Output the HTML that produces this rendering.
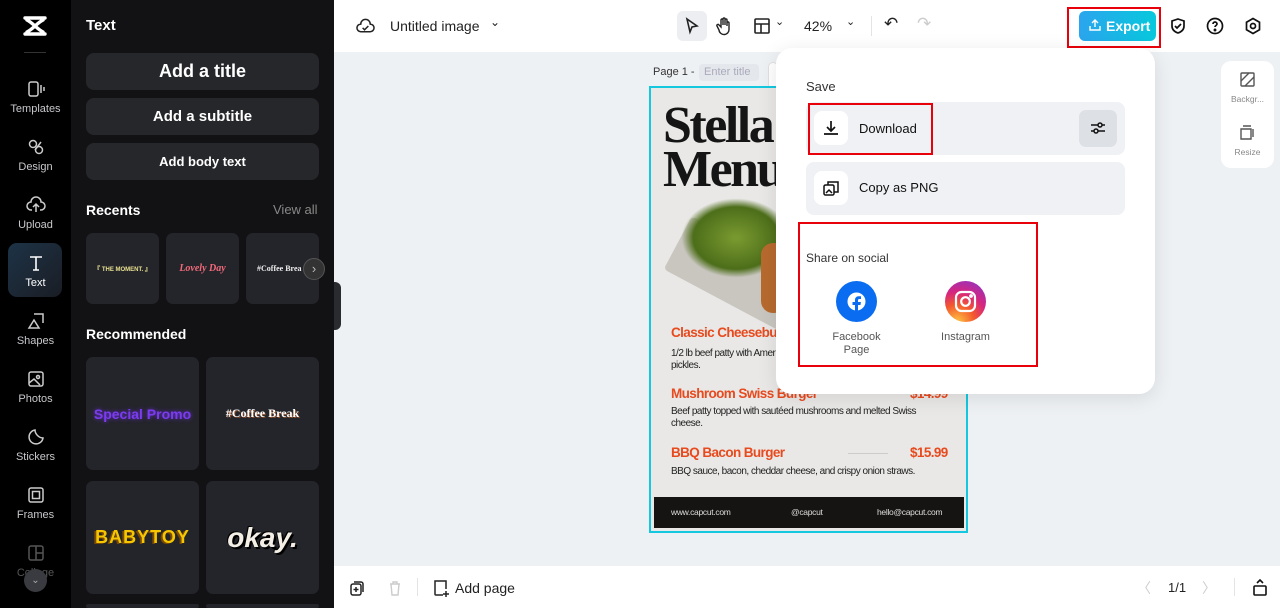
<!DOCTYPE html>
<html style="width:1280px;height:608px;overflow:hidden"><head><meta charset="utf-8"><style>
*{box-sizing:border-box;margin:0;padding:0}
body{width:1280px;height:608px;overflow:hidden;font-family:"Liberation Sans",sans-serif;background:#eef1f4;position:relative}
.abs{position:absolute}
.rail{left:0;top:0;width:71px;height:608px;background:#000}
.ri{position:absolute;left:0;width:71px;text-align:center;color:#c8c8cc;font-size:11px}
.ri svg{display:block;margin:0 auto 4px}
.panel{left:71px;top:0;width:263px;height:608px;background:#121214;color:#fff;overflow:hidden}
.btn{position:absolute;left:15px;width:233px;background:#26272b;border-radius:8px;text-align:center;font-weight:bold}
.card{position:absolute;background:#24252a;border-radius:7px;display:flex;align-items:center;justify-content:center}
.top{left:334px;top:0;width:946px;height:52px;background:#fff}
.bot{left:334px;top:566px;width:946px;height:42px;background:#fff}
.pop{left:776px;top:48px;width:379px;height:346px;background:#fff;border-radius:16px;box-shadow:0 4px 20px rgba(0,0,0,.1)}
.row{position:absolute;left:30px;width:319px;height:53px;background:#eff1f4;border-radius:8px}
.ib{position:absolute;left:8px;top:9px;width:34px;height:34px;background:#fff;border-radius:8px;display:flex;align-items:center;justify-content:center}
.red{position:absolute;border:2px solid #e8000b}
.menu{color:#e84a1e;font-weight:bold;font-size:13.5px;letter-spacing:-.6px}
.desc{color:#222;font-size:10px;letter-spacing:-.5px;line-height:12px}
</style></head><body>
<div class="abs rail">
 <svg class="abs" style="left:22px;top:15px" width="26" height="22" viewBox="0 0 26 22"><path d="M3 3h20M3 19h20M5 5c6 3 10 9 16 12M21 5C15 8 11 14 5 17" fill="none" stroke="#fff" stroke-width="3.4" stroke-linecap="round"/></svg>
 <div class="abs" style="left:24px;top:52px;width:22px;height:1px;background:#333"></div>
 <div class="ri" style="top:79px"><svg width="20" height="20" viewBox="0 0 20 20" fill="none" stroke="#ccc" stroke-width="1.5"><rect x="3" y="3" width="9" height="14" rx="2"/><path d="M15 6v8M18 8v4"/></svg>Templates</div>
 <div class="ri" style="top:137px"><svg width="20" height="20" viewBox="0 0 20 20" fill="none" stroke="#ccc" stroke-width="1.5"><circle cx="7" cy="7" r="3.5"/><circle cx="13" cy="13" r="3.5"/><path d="M9 13l6-8"/></svg>Design</div>
 <div class="ri" style="top:195px"><svg width="20" height="20" viewBox="0 0 20 20" fill="none" stroke="#ccc" stroke-width="1.5"><path d="M6 15H5a4 4 0 010-8 5 5 0 0110 0 4 4 0 010 8h-1M10 17V10M7 12l3-3 3 3"/></svg>Upload</div>
 <div class="abs" style="left:8px;top:243px;width:54px;height:54px;border-radius:9px;background:linear-gradient(135deg,#1d3347,#1a1d24)"></div>
 <div class="ri" style="top:253px;color:#fff"><svg width="20" height="20" viewBox="0 0 20 20" fill="none" stroke="#fff" stroke-width="1.6"><path d="M4 4h12M10 4v13M7 17h6"/></svg>Text</div>
 <div class="ri" style="top:311px"><svg width="20" height="20" viewBox="0 0 20 20" fill="none" stroke="#ccc" stroke-width="1.5"><path d="M8 3h9v9M3 17l5-8 5 8z"/></svg>Shapes</div>
 <div class="ri" style="top:369px"><svg width="20" height="20" viewBox="0 0 20 20" fill="none" stroke="#ccc" stroke-width="1.5"><rect x="3" y="3" width="14" height="14" rx="2"/><circle cx="12" cy="8" r="1.5"/><path d="M3 14l5-4 6 6"/></svg>Photos</div>
 <div class="ri" style="top:427px"><svg width="20" height="20" viewBox="0 0 20 20" fill="none" stroke="#ccc" stroke-width="1.5"><path d="M17 11a7 7 0 11-8-8c0 4 4 8 8 8z"/></svg>Stickers</div>
 <div class="ri" style="top:485px"><svg width="20" height="20" viewBox="0 0 20 20" fill="none" stroke="#ccc" stroke-width="1.5"><rect x="3" y="3" width="14" height="14" rx="2"/><rect x="6.5" y="6.5" width="7" height="7"/></svg>Frames</div>
 <div class="ri" style="top:543px;color:#555"><svg width="20" height="20" viewBox="0 0 20 20" fill="none" stroke="#555" stroke-width="1.5"><rect x="3" y="3" width="14" height="14" rx="2"/><path d="M10 3v14M10 10h7"/></svg>Collage</div>
 <div class="abs" style="left:24px;top:569px;width:23px;height:23px;border-radius:50%;background:#3a3b40;color:#aaa;font-size:10px;text-align:center;line-height:23px">⌄</div>
</div>
<div class="abs panel">
 <div class="abs" style="left:15px;top:17px;font-size:15px;font-weight:bold">Text</div>
 <div class="btn" style="top:53px;height:37px;line-height:37px;font-size:18px">Add a title</div>
 <div class="btn" style="top:98px;height:37px;line-height:37px;font-size:15px">Add a subtitle</div>
 <div class="btn" style="top:143px;height:37px;line-height:37px;font-size:13px">Add body text</div>
 <div class="abs" style="left:15px;top:202px;font-size:14px;font-weight:bold">Recents</div>
 <div class="abs" style="left:202px;top:202px;font-size:13px;color:#888">View all</div>
 <div class="card" style="left:15px;top:233px;width:73px;height:71px;font-size:6px;color:#e8e090;font-weight:bold">『 THE MOMENT. 』</div>
 <div class="card" style="left:95px;top:233px;width:73px;height:71px;font-size:10px;color:#f26a7a;font-style:italic;font-weight:bold;font-family:'Liberation Serif',serif">Lovely Day</div>
 <div class="card" style="left:175px;top:233px;width:73px;height:71px;font-size:8px;color:#eee;font-weight:bold;font-family:'Liberation Serif',serif;justify-content:flex-start;padding-left:11px;overflow:hidden;white-space:nowrap">#Coffee Brea</div>
 <div class="abs" style="left:232px;top:258px;width:22px;height:22px;border-radius:50%;background:#333;border:1px solid #555;color:#bbb;text-align:center;line-height:19px;font-size:13px">›</div>
 <div class="abs" style="left:15px;top:326px;font-size:14px;font-weight:bold">Recommended</div>
 <div class="card" style="left:15px;top:357px;width:113px;height:113px;color:#7b3cf0;font-size:14px;font-weight:bold;text-shadow:0 0 4px #6a2ed8">Special Promo</div>
 <div class="card" style="left:135px;top:357px;width:113px;height:113px;color:#fff;font-size:12px;font-weight:bold;font-family:'Liberation Serif',serif;text-shadow:1px 1px 0 #8a4a2a">#Coffee Break</div>
 <div class="card" style="left:15px;top:481px;width:113px;height:113px;color:#f6c600;font-size:18px;font-weight:900;letter-spacing:1px;text-shadow:-2px 1px 0 #7a4a00">BABYTOY</div>
 <div class="card" style="left:135px;top:481px;width:113px;height:113px;color:#f4efe6;font-size:28px;font-weight:900;font-style:italic;text-shadow:2px 2px 0 #000,-1px -1px 0 #000">okay.</div>
 <div class="card" style="left:15px;top:604px;width:113px;height:4px"></div>
 <div class="card" style="left:135px;top:604px;width:113px;height:4px"></div>
</div>
<div class="abs" style="left:334px;top:282px;width:7px;height:48px;background:#2a2b2f;border-radius:0 6px 6px 0"></div>
<div class="abs top">
 <svg class="abs" style="left:22px;top:17px" width="19" height="18" viewBox="0 0 20 18" fill="none" stroke="#222" stroke-width="1.6"><path d="M6 15H5a4 4 0 010-8 5 5 0 0110 0 4 4 0 010 8z"/><path d="M7 11l2 2 4-4"/></svg>
 <div class="abs" style="left:56px;top:18px;font-size:14px;color:#222">Untitled image</div>
 <div class="abs" style="left:156px;top:15px;font-size:12px;color:#222">⌄</div>
 <div class="abs" style="left:343px;top:11px;width:30px;height:30px;background:#eceef2;border-radius:6px"></div>
 <svg class="abs" style="left:350px;top:17px" width="16" height="18" viewBox="0 0 16 18" fill="none" stroke="#222" stroke-width="1.6"><path d="M3 2l10 7-5 1-2 5z"/></svg>
 <svg class="abs" style="left:382px;top:16px" width="18" height="20" viewBox="0 0 18 20" fill="none" stroke="#222" stroke-width="1.4"><path d="M5 11V4a1 1 0 012 0v5V3a1 1 0 012 0v6V4a1 1 0 012 0v6-3a1 1 0 012 0v6a5 5 0 01-10 1l-2-4a1 1 0 012-1z"/></svg>
 <svg class="abs" style="left:419px;top:17px" width="18" height="18" viewBox="0 0 18 18" fill="none" stroke="#222" stroke-width="1.6"><rect x="2" y="2" width="14" height="14" rx="1"/><path d="M2 7h14M8 7v9"/></svg>
 <div class="abs" style="left:441px;top:15px;font-size:11px;color:#222">⌄</div>
 <div class="abs" style="left:470px;top:18px;font-size:14px;color:#222">42%</div>
 <div class="abs" style="left:512px;top:15px;font-size:11px;color:#222">⌄</div>
 <div class="abs" style="left:537px;top:16px;width:1px;height:20px;background:#e4e4e4"></div>
 <div class="abs" style="left:550px;top:14px;font-size:17px;color:#222">↶</div>
 <div class="abs" style="left:583px;top:14px;font-size:17px;color:#ccc">↷</div>
 <div class="red" style="left:733px;top:7px;width:94px;height:41px"></div>
 <div class="abs" style="left:745px;top:11px;width:77px;height:30px;border-radius:6px;background:linear-gradient(90deg,#2ba5ee,#07c8dc);color:#fff;font-weight:bold;font-size:14px;line-height:30px;padding-left:27px">Export</div>
 <svg class="abs" style="left:754px;top:18px" width="14" height="14" viewBox="0 0 14 14" fill="none" stroke="#fff" stroke-width="1.4"><path d="M7 9V2M4 5l3-3 3 3M2 8v4h10V8"/></svg>
 <svg class="abs" style="left:835px;top:17px" width="18" height="18" viewBox="0 0 18 18" fill="none" stroke="#111" stroke-width="1.7"><path d="M9 2l6 2v5c0 4-3 6-6 7-3-1-6-3-6-7V4z"/><path d="M6 9l2 2 4-4"/></svg>
 <svg class="abs" style="left:872px;top:17px" width="18" height="18" viewBox="0 0 18 18" fill="none" stroke="#111" stroke-width="1.7"><circle cx="9" cy="9" r="7.5"/><path d="M7 7a2 2 0 114 0c0 1.5-2 1.5-2 3"/><circle cx="9" cy="13" r=".6" fill="#111"/></svg>
 <svg class="abs" style="left:910px;top:17px" width="18" height="18" viewBox="0 0 18 18" fill="none" stroke="#111" stroke-width="1.7"><path d="M9 1.5l6.5 3.75v7.5L9 16.5l-6.5-3.75v-7.5z"/><circle cx="9" cy="9" r="2.5"/></svg>
</div>
<div class="abs" style="left:653px;top:66px;font-size:11px;color:#333">Page 1 -</div>
<div class="abs" style="left:699px;top:64px;width:60px;height:17px;background:#e4e7eb;border-radius:4px;font-size:11px;color:#aab;padding:2px 5px">Enter title</div>
<div class="abs" style="left:768px;top:62px;width:10px;height:34px;background:#fff;border:1px solid #e0e0e0;border-radius:6px"></div>
<!-- page -->
<div class="abs" style="left:649px;top:86px;width:319px;height:447px;border:2px solid #14c8e0;background:#e9e8e6;overflow:hidden">
 <div class="abs" style="left:12px;top:16px;font-family:'Liberation Serif',serif;font-weight:bold;font-size:52px;line-height:44px;color:#151515;letter-spacing:-2.5px">Stella<br>Menu</div>
 <div class="abs" style="left:18px;top:160px;width:150px;height:60px;background:#c9c6c0;transform:rotate(28deg);border-radius:4px"></div>
 <div class="abs" style="left:30px;top:110px;width:110px;height:80px;background:radial-gradient(ellipse,#7a9a30,#4d6e1a 55%,transparent 70%)"></div>
 <div class="abs" style="left:110px;top:155px;width:25px;height:70px;background:#b76a2e;border-radius:12px"></div>
 <div class="abs menu" style="left:20px;top:237px">Classic Cheeseburger</div>
 <div class="abs desc" style="left:20px;top:260px">1/2 lb beef patty with American<br>pickles.</div>
 <div class="abs menu" style="left:20px;top:298px">Mushroom Swiss Burger</div>
 <div class="abs menu" style="left:259px;top:298px">$14.99</div>
 <div class="abs desc" style="left:20px;top:318px">Beef patty topped with sautéed mushrooms and melted Swiss<br>cheese.</div>
 <div class="abs menu" style="left:20px;top:357px">BBQ Bacon Burger</div>
 <div class="abs" style="left:197px;top:365px;width:40px;height:1px;background:#ccc"></div>
 <div class="abs menu" style="left:259px;top:357px">$15.99</div>
 <div class="abs desc" style="left:20px;top:378px">BBQ sauce, bacon, cheddar cheese, and crispy onion straws.</div>
 <div class="abs" style="left:3px;top:409px;width:310px;height:31px;background:#161412;color:#ddd;font-size:8.5px;letter-spacing:-.3px">
  <span class="abs" style="left:17px;top:10px">www.capcut.com</span><span class="abs" style="left:137px;top:10px">@capcut</span><span class="abs" style="left:223px;top:10px">hello@capcut.com</span></div>
</div>
<!-- popup -->
<div class="abs pop">
 <div class="abs" style="left:30px;top:31px;font-size:13px;color:#333">Save</div>
 <div class="row" style="top:54px"><div class="ib"><svg width="18" height="18" viewBox="0 0 18 18" fill="none" stroke="#111" stroke-width="1.7"><path d="M9 2v10M5 8l4 4 4-4M2 15h14"/></svg></div>
  <div class="abs" style="left:53px;top:19px;font-size:13px;color:#111">Download</div>
  <div class="abs" style="left:273px;top:8px;width:38px;height:37px;background:#dde0e5;border-radius:7px"></div>
  <svg class="abs" style="left:283px;top:17px" width="18" height="18" viewBox="0 0 18 18" fill="none" stroke="#111" stroke-width="1.5"><path d="M2 6h14M2 12h14"/><circle cx="11" cy="6" r="2" fill="#dde0e5"/><circle cx="7" cy="12" r="2" fill="#dde0e5"/></svg>
 </div>
 <div class="red" style="left:32px;top:55px;width:125px;height:52px"></div>
 <div class="row" style="top:114px"><div class="ib"><svg width="18" height="18" viewBox="0 0 18 18" fill="none" stroke="#111" stroke-width="1.5"><rect x="2" y="6" width="10" height="10" rx="1.5"/><path d="M6 6V3h10v10h-4M4 14l3-3 3 3"/></svg></div>
  <div class="abs" style="left:53px;top:18px;font-size:13px;color:#111">Copy as PNG</div></div>
 <div class="red" style="left:22px;top:174px;width:240px;height:145px"></div>
 <div class="abs" style="left:30px;top:203px;font-size:12px;color:#333">Share on social</div>
 <div class="abs" style="left:60px;top:233px;width:41px;height:41px;border-radius:50%;background:#0a6cf0"></div>
 <svg class="abs" style="left:70px;top:243px" width="21" height="21" viewBox="0 0 21 21"><circle cx="10.5" cy="10.5" r="9" fill="#fff"/><path d="M12 21v-7h2.5l.4-3H12V9.5c0-.9.3-1.5 1.5-1.5H15V5.3c-.3 0-1.2-.1-2.2-.1-2.2 0-3.8 1.3-3.8 3.8V11H6.5v3H9v7z" fill="#0a6cf0"/></svg>
 <div class="abs" style="left:50px;top:283px;width:61px;text-align:center;font-size:11px;color:#555;line-height:13px">Facebook<br>Page</div>
 <div class="abs" style="left:169px;top:233px;width:41px;height:41px;border-radius:50%;background:radial-gradient(circle at 30% 100%,#fdc443,#f4582d 35%,#d6257f 60%,#8b36c8 95%)"></div>
 <svg class="abs" style="left:178px;top:242px" width="23" height="23" viewBox="0 0 23 23" fill="none" stroke="#fff" stroke-width="2.2"><rect x="2" y="2" width="19" height="19" rx="5.5"/><circle cx="11.5" cy="11.5" r="4.3"/><circle cx="17" cy="6" r=".8" fill="#fff"/></svg>
 <div class="abs" style="left:159px;top:283px;width:61px;text-align:center;font-size:11px;color:#555">Instagram</div>
</div>
<div class="abs" style="left:1221px;top:61px;width:53px;height:107px;background:#fff;border-radius:10px">
 <svg class="abs" style="left:19px;top:11px" width="15" height="15" viewBox="0 0 15 15" fill="none" stroke="#555" stroke-width="1.4"><rect x="1" y="1" width="13" height="13" rx="1"/><path d="M1 9l8-8M5 14l9-9"/></svg>
 <div class="abs" style="left:0;top:33px;width:53px;text-align:center;font-size:8.5px;color:#888">Backgr...</div>
 <svg class="abs" style="left:19px;top:64px" width="15" height="15" viewBox="0 0 15 15" fill="none" stroke="#555" stroke-width="1.4"><path d="M1 4h10v10H1zM3 1h8M13 4v8"/></svg>
 <div class="abs" style="left:0;top:86px;width:53px;text-align:center;font-size:8.5px;color:#888">Resize</div>
</div>
<div class="abs bot">
 <svg class="abs" style="left:15px;top:14px" width="15" height="16" viewBox="0 0 15 16" fill="none" stroke="#222" stroke-width="1.5"><rect x="2" y="4" width="10" height="11" rx="2"/><path d="M5 2h7a2 2 0 012 2v8M7 7v5M4.5 9.5h5"/></svg>
 <svg class="abs" style="left:54px;top:14px" width="14" height="16" viewBox="0 0 14 16" fill="none" stroke="#ccc" stroke-width="1.4"><path d="M2 4h10M5 4V2h4v2M3 4l1 11h6l1-11"/></svg>
 <div class="abs" style="left:83px;top:12px;width:1px;height:18px;background:#e4e4e4"></div>
 <svg class="abs" style="left:99px;top:13px" width="17" height="18" viewBox="0 0 17 18" fill="none" stroke="#222" stroke-width="1.5"><path d="M10 16H3a1 1 0 01-1-1V2h11v8M13 12v6M10 15h6"/></svg>
 <div class="abs" style="left:121px;top:14px;font-size:14px;color:#222">Add page</div>
 <div class="abs" style="left:803px;top:12px;font-size:14px;color:#ccc">〈</div>
 <div class="abs" style="left:834px;top:14px;font-size:13px;color:#222">1/1</div>
 <div class="abs" style="left:868px;top:12px;font-size:14px;color:#ccc">〉</div>
 <div class="abs" style="left:900px;top:12px;width:1px;height:18px;background:#e4e4e4"></div>
 <svg class="abs" style="left:918px;top:12px" width="16" height="18" viewBox="0 0 16 18" fill="none" stroke="#111" stroke-width="1.6"><rect x="2" y="8" width="12" height="9" rx="1"/><path d="M5 5l3-3 3 3"/></svg>
</div>
</body></html>
